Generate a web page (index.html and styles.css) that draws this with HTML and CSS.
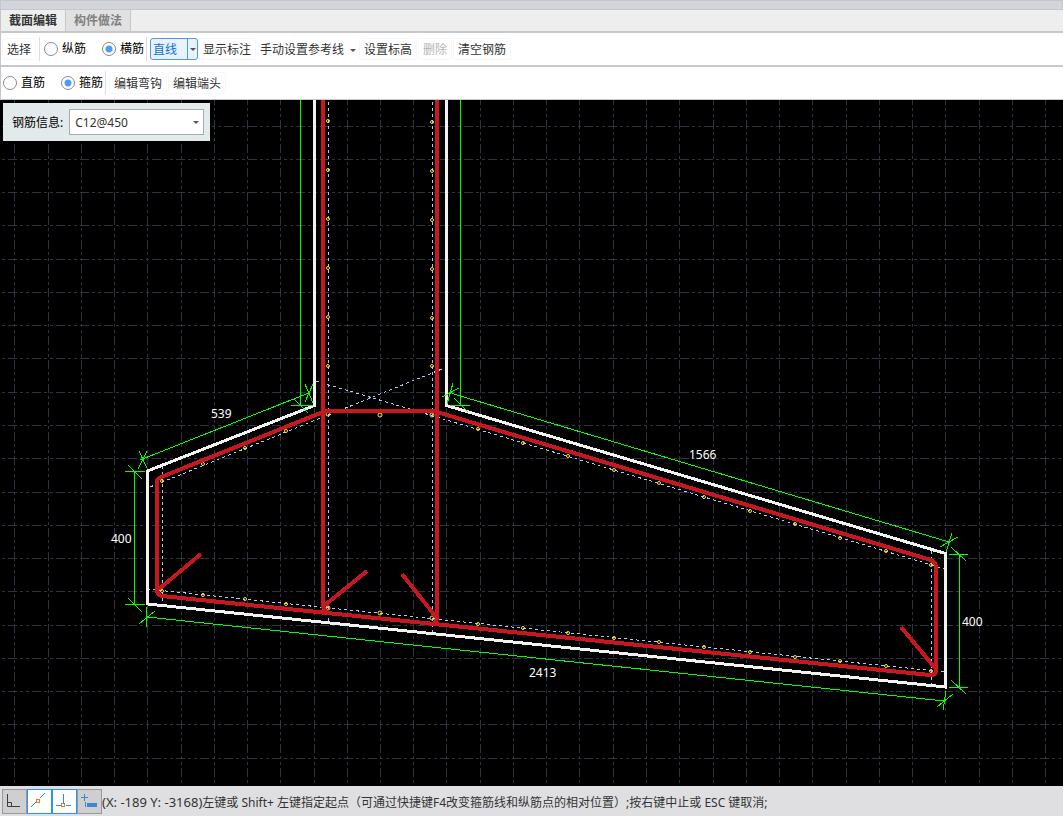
FILE: index.html
```html
<!DOCTYPE html>
<html lang="zh-CN">
<head>
<meta charset="utf-8">
<title>截面编辑</title>
<link rel="stylesheet" href="styles.css">
</head>
<body>
<div class="titlebar"></div>
<nav class="tabs" role="tablist">
  <button class="tab tab-active" role="tab" aria-selected="true">截面编辑</button>
  <button class="tab" role="tab" aria-selected="false">构件做法</button>
</nav>
<div class="toolbar" role="toolbar" aria-label="编辑">
  <button class="tool">选择</button>
  <span class="sep"></span>
  <label class="radio"><input type="radio" name="dir">纵筋</label>
  <label class="radio"><input type="radio" name="dir" checked>横筋</label>
  <span class="sep"></span>
  <div class="split">
    <button class="split-main">直线</button>
    <button class="split-arrow" aria-label="更多"><i class="caret"></i></button>
  </div>
  <button class="tool">显示标注</button>
  <button class="tool tool-menu">手动设置参考线<i class="caret"></i></button>
  <button class="tool">设置标高</button>
  <button class="tool" disabled>删除</button>
  <button class="tool">清空钢筋</button>
</div>
<div class="toolbar toolbar-last" role="toolbar" aria-label="钢筋类型">
  <label class="radio"><input type="radio" name="kind">直筋</label>
  <label class="radio"><input type="radio" name="kind" checked>箍筋</label>
  <span class="sep"></span>
  <button class="tool">编辑弯钩</button>
  <button class="tool">编辑端头</button>
</div>
<main class="canvas">
  <svg class="drawing" viewBox="0 100 1063 686" role="img" aria-label="截面图">
    <path class="grid" d="M2 126.5H1062M2 159.5H1062M2 192.5H1062M2 225.5H1062M2 259.5H1062M2 292.5H1062M2 325.5H1062M2 358.5H1062M2 392.5H1062M2 425.5H1062M2 458.5H1062M2 492.5H1062M2 525.5H1062M2 558.5H1062M2 591.5H1062M2 625.5H1062M2 658.5H1062M2 691.5H1062M2 724.5H1062M2 758.5H1062
    M14.5 90V783M48.5 90V783M81.5 90V783M114.5 90V783M147.5 90V783M181.5 90V783M214.5 90V783M247.5 90V783M280.5 90V783M314.5 90V783M347.5 90V783M380.5 90V783M413.5 90V783M446.5 90V783M480.5 90V783M513.5 90V783M546.5 90V783M579.5 90V783M613.5 90V783M646.5 90V783M679.5 90V783M713.5 90V783M746.5 90V783M779.5 90V783M812.5 90V783M846.5 90V783M879.5 90V783M912.5 90V783M945.5 90V783M979.5 90V783M1012.5 90V783M1045.5 90V783"/>
    <path class="cover" d="M328.5 96V623M432.5 96V634M162.5 466V606M931.5 551V687M147 589L945 672M150 487L447 367M316 381L945 569"/>
    <g class="bars">
      <circle cx="328" cy="121" r="1.5"/><circle cx="328" cy="170" r="1.5"/><circle cx="328" cy="219" r="1.5"/><circle cx="328" cy="268" r="1.5"/><circle cx="328" cy="317" r="1.5"/><circle cx="328" cy="366" r="1.5"/>
      <circle cx="432" cy="122" r="1.5"/><circle cx="432" cy="171" r="1.5"/><circle cx="432" cy="220" r="1.5"/><circle cx="432" cy="269" r="1.5"/><circle cx="432" cy="318" r="1.5"/><circle cx="432" cy="366" r="1.5"/>
      <circle cx="328" cy="414" r="2"/><circle cx="380" cy="415" r="2"/><circle cx="432" cy="415" r="2"/>
      <circle cx="286" cy="431" r="1.5"/><circle cx="245" cy="448" r="1.5"/><circle cx="203" cy="464" r="1.5"/><circle cx="162" cy="481" r="1.5"/>
      <circle cx="162" cy="591" r="1.5"/><circle cx="203" cy="595" r="1.5"/><circle cx="245" cy="599" r="1.5"/><circle cx="286" cy="604" r="1.5"/><circle cx="328" cy="608" r="2"/><circle cx="380" cy="613" r="2"/><circle cx="432" cy="618" r="2"/>
      <circle cx="478" cy="624" r="1.5"/><circle cx="523" cy="628" r="1.5"/><circle cx="568" cy="633" r="1.5"/><circle cx="614" cy="638" r="1.5"/><circle cx="659" cy="642" r="1.5"/><circle cx="704" cy="647" r="1.5"/><circle cx="750" cy="652" r="1.5"/><circle cx="795" cy="657" r="1.5"/><circle cx="840" cy="661" r="1.5"/><circle cx="886" cy="666" r="1.5"/><circle cx="931" cy="671" r="1.5"/>
      <circle cx="478" cy="429" r="1.5"/><circle cx="523" cy="443" r="1.5"/><circle cx="568" cy="456" r="1.5"/><circle cx="614" cy="470" r="1.5"/><circle cx="659" cy="483" r="1.5"/><circle cx="704" cy="497" r="1.5"/><circle cx="750" cy="511" r="1.5"/><circle cx="795" cy="524" r="1.5"/><circle cx="840" cy="538" r="1.5"/><circle cx="886" cy="551" r="1.5"/><circle cx="931" cy="565" r="1.5"/>
    </g>
    <path class="outline" d="M314.5 96V405.5L147.5 471V604L945.5 687V553.5L446.5 405.5V96"/>
    <path class="stirrup" d="M323 96V605Q323 610 328 613M437 96V616Q437 621 434 623M323 411H437M323 412L160 477.500Q157 479 157 482V590Q157 595 162 596L930 675Q936 675 936 670V567Q936 562 931 560L437 412M159 589L201 554M325 605L367 571M402 574L436 617M901 627L935 668"/>
    <path class="dims" d="M300.5 96V405M291 405.500H313M294 399L308 413
    M460.5 96V405M450 405.500H470M454 398L468 412
    M140 460L310 392.500M139 451L147 468M147 451L138 469M305 384L313 403M313 384L305 402
    M134.500 471V604M125 471.500H145M128 465L142 479M125 604.500H145M128 598L142 612
    M147 617L944 701M147 607L146 627M139 624L155 611M946 691L943 710M937 707L953 694
    M452 393.500L949 542M453 383L447 404M442 397L459 388M952 533L946 552M940 547L958 537
    M959.500 554V687M949 554.500H968M951 547L966 561M949 687.500H968M951 680L966 694"/>
    <g class="labels">
      <text x="211" y="418">539</text>
      <text x="111" y="543">400</text>
      <text x="689" y="459">1566</text>
      <text x="529" y="677">2413</text>
      <text x="962" y="626">400</text>
    </g>
  </svg>
  <form class="panel">
    <label for="rebar">钢筋信息:</label>
    <div class="combo">
      <select id="rebar"><option>C12@450</option></select>
      <i class="caret combo-caret"></i>
    </div>
  </form>
</main>
<footer class="status">
  <div class="modes">
    <button class="mode" aria-label="正交"><svg viewBox="1 1 23 23"><path d="M5.500 5V17.500H18M5.500 13.500H9.500V17.500" stroke="#3c3c3c"/></svg></button>
    <button class="mode mode-on" aria-label="对象捕捉"><svg viewBox="1 1 23 23"><path d="M4 18L9 13M13 9L18 4" stroke="#3a87d6"/><rect x="9.500" y="10.500" width="3" height="3" stroke="#ee7518"/></svg></button>
    <button class="mode mode-on" aria-label="垂足捕捉"><svg viewBox="1 1 23 23"><path d="M11.500 5V14M4 16.500H9M14 16.500H19" stroke="#3a87d6"/><rect x="9.500" y="14.500" width="3" height="3" stroke="#ee7518"/></svg></button>
    <button class="mode" aria-label="动态输入"><svg viewBox="1 1 23 23"><path d="M4 8.500H11M7.500 5V12" stroke="#3a87d6"/><rect x="10" y="14" width="10" height="4" fill="#3a87d6"/><path d="M8.500 13V18" stroke="#3a87d6"/></svg></button>
  </div>
  <span class="message"><span class="coords">(X: -189 Y: -3168)</span>左键或 Shift+ 左键指定起点（可通过快捷键F4改变箍筋线和纵筋点的相对位置）;按右键中止或 ESC 键取消;</span>
</footer>
</body>
</html>
```
FILE: styles.css
```css
* {
  box-sizing: border-box;
}

body {
  margin: 0;
  height: 100vh;
  display: flex;
  flex-direction: column;
  background: #fff;
  color: #333;
  font: 12px/16px "Noto Sans", "Noto Sans CJK SC", sans-serif;
}

button,
select,
input {
  margin: 0;
  padding: 0;
  font: inherit;
  color: inherit;
}

button {
  border: 0;
  background: none;
  white-space: nowrap;
}

.titlebar {
  flex: none;
  height: 10px;
  background: #d4d5da;
  border: 1px solid #c6c7cd;
}

.tabs {
  flex: none;
  display: flex;
  height: 23px;
  background: #eee;
  border-left: 1px solid #c6c7cd;
  border-bottom: 2px solid #c6c7cd;
}

.tab {
  width: 65px;
  padding-top: 1px;
  background: #e1e1e1;
  border-right: 1px solid #c6c7cd;
  color: #808080;
  font-weight: 700;
}

.tab-active {
  background: #eee;
  color: #333;
}

.toolbar {
  flex: none;
  display: flex;
  align-items: center;
  height: 34px;
  padding-left: 1px;
  border-left: 1px solid #c6c7cd;
  border-bottom: 2px solid #c6c7cd;
}

.toolbar-last {
  height: 33px;
  border-bottom-width: 1px;
}

.tool {
  height: 22px;
  padding: 2px 4px 0;
  border: 1px solid #f7f7f7;
  border-radius: 3px;
  margin-right: 1px;
}

.tool:disabled {
  color: #b4b4b4;
}

.tool-menu {
  display: flex;
  align-items: center;
  gap: 6px;
  padding: 2px 1px 0 2px;
  border-color: transparent;
}

.caret {
  width: 0;
  height: 0;
  border: 3px solid transparent;
  border-top-color: #555;
  border-bottom: 0;
}

.sep {
  width: 1px;
  height: 24px;
  margin: 0 3px 0 2px;
  background: #ddd;
}

.radio {
  display: flex;
  align-items: center;
  gap: 4px;
  padding-left: 1px;
  color: #000;
}

.radio + .radio {
  margin-left: 15px;
}

.radio input {
  appearance: none;
  width: 14px;
  height: 14px;
  border: 1px solid #8a8a8a;
  border-radius: 50%;
  background: #fff;
}

.radio input:checked {
  background: radial-gradient(circle, #4a9cf5 3px, #fff 4px);
}

.split {
  display: flex;
  height: 22px;
  border: 1px solid #4a9cf0;
  border-radius: 3px;
  background: #e8f2fd;
  color: #0a6fd6;
}

.split-main {
  width: 36px;
  padding: 2px 8px 0 0;
}

.split-arrow {
  display: flex;
  align-items: center;
  justify-content: center;
  width: 10px;
  border-left: 1px solid #4a9cf0;
}

.canvas {
  position: relative;
  flex: 1;
  min-height: 0;
  background: #000;
}

.drawing {
  display: block;
  width: 100%;
  height: 100%;
  fill: none;
  shape-rendering: crispEdges;
}

.grid {
  stroke: #2e3440;
  stroke-dasharray: 3 3 9 3 3 3;
}

.cover {
  stroke: #a9cdf4;
  stroke-dasharray: 3 3;
}

.bars {
  stroke: #ffe030;
  shape-rendering: auto;
}

.outline {
  stroke: #f2f2f2;
  stroke-width: 3;
}

.stirrup {
  stroke: #c8171e;
  stroke-width: 4;
}

.dims {
  stroke: #0f0;
}

.labels {
  fill: #fff;
  font-size: 12px;
}

.panel {
  position: absolute;
  top: 3px;
  left: 3px;
  display: flex;
  align-items: center;
  gap: 6px;
  padding: 6px 6px 6px 9px;
  background: #e2eaeb;
  color: #000;
}

.panel label {
  padding-top: 2px;
}

.combo {
  position: relative;
  color: #333;
}

.combo select {
  appearance: none;
  display: block;
  width: 135px;
  height: 26px;
  padding: 2px 0 0 5px;
  border: 1px solid #aaa;
  border-radius: 0;
  background: #fff;
}

.combo-caret {
  position: absolute;
  top: 12px;
  right: 5px;
}

.status {
  flex: none;
  display: flex;
  align-items: center;
  height: 30px;
  padding-left: 2px;
  background: #dfdfe1;
}

.modes {
  display: flex;
}

.mode {
  width: 25px;
  height: 25px;
  border: 1px solid #999;
  background: #cfcfd1;
}

.mode-on {
  border-color: #2f93f5;
  background: #fff;
}

.mode svg {
  display: block;
  width: 23px;
  height: 23px;
  fill: none;
}

.message {
  padding-top: 2px;
  white-space: nowrap;
}

.coords {
  font-size: 13px;
}
```
